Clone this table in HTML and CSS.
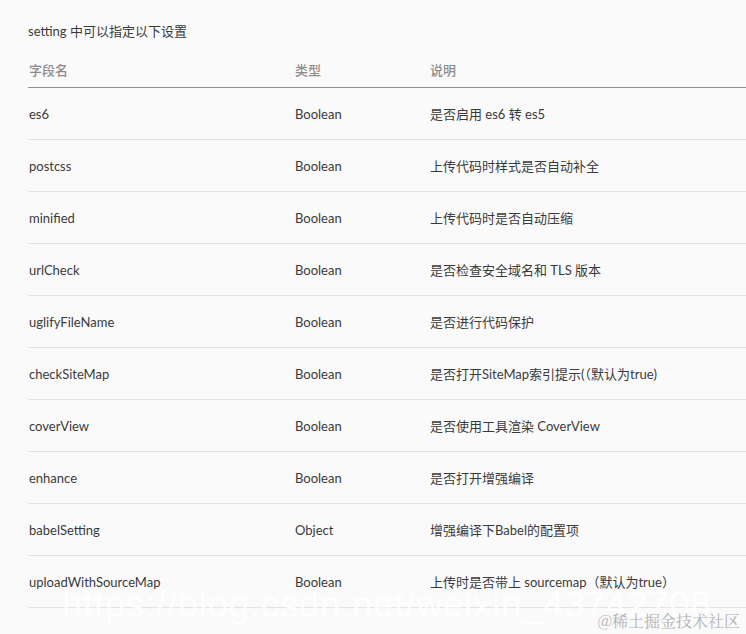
FILE: index.html
```html
<!DOCTYPE html>
<html lang="zh-CN">
<head>
<meta charset="utf-8">
<title>setting</title>
<link rel="stylesheet" href="styles.css">
</head>
<body>
<div class="page">
  <p class="intro">setting 中可以指定以下设置</p>
  <table class="fields">
    <thead>
      <tr><th class="c1">字段名</th><th class="c2">类型</th><th class="c3">说明</th></tr>
    </thead>
    <tbody>
      <tr><td>es6</td><td>Boolean</td><td>是否启用 es6 转 es5</td></tr>
      <tr><td>postcss</td><td>Boolean</td><td>上传代码时样式是否自动补全</td></tr>
      <tr><td>minified</td><td>Boolean</td><td>上传代码时是否自动压缩</td></tr>
      <tr><td>urlCheck</td><td>Boolean</td><td>是否检查安全域名和 TLS 版本</td></tr>
      <tr><td>uglifyFileName</td><td>Boolean</td><td>是否进行代码保护</td></tr>
      <tr><td>checkSiteMap</td><td>Boolean</td><td>是否打开SiteMap索引提示(（默认为true)</td></tr>
      <tr><td>coverView</td><td>Boolean</td><td>是否使用工具渲染 CoverView</td></tr>
      <tr><td>enhance</td><td>Boolean</td><td>是否打开增强编译</td></tr>
      <tr><td>babelSetting</td><td>Object</td><td>增强编译下Babel的配置项</td></tr>
      <tr><td>uploadWithSourceMap</td><td>Boolean</td><td>上传时是否带上 sourcemap（默认为true）</td></tr>
    </tbody>
  </table>
  <div class="wm-url">https://blog.csdn.net/weixin_43742708</div>
  <div class="wm-brand">@稀土掘金技术社区</div>
</div>
</body>
</html>
```

FILE: styles.css
```css
html, body {
  margin: 0;
  padding: 0;
  background: #fafafa;
}
body {
  font-family: "Lato", "Noto Sans CJK SC", sans-serif;
  font-size: 13px;
  color: #3a3a3a;
}
.page {
  position: relative;
  height: 634px;
  overflow: hidden;
  padding-left: 28px;
  box-sizing: border-box;
}
.intro {
  margin: 0;
  padding-top: 21px;
  line-height: 20px;
  height: 20px;
}
.fields {
  margin-top: 11px;
  width: 760px;
  border-collapse: collapse;
  table-layout: fixed;
}
.fields th {
  text-align: left;
  font-weight: 500;
  color: #8c8c8c;
  height: 35px;
  padding: 0 0 0 1px;
  border-bottom: 1px solid #8f8f8f;
  vertical-align: middle;
}
.fields .c1 { width: 265px; }
.fields .c2 { width: 134px; }
.fields td {
  height: 51px;
  padding: 0 0 0 1px;
  border-bottom: 1px solid #e3e3e3;
  vertical-align: middle;
  white-space: nowrap;
}
.wm-url {
  position: absolute;
  left: 62px;
  top: 584px;
  font-family: "Liberation Sans", sans-serif;
  font-size: 36px;
  letter-spacing: 1px;
  color: rgba(255, 255, 255, 0.9);
  white-space: nowrap;
  pointer-events: none;
}
.wm-brand {
  position: absolute;
  right: 6px;
  top: 609px;
  font-family: "Noto Serif CJK SC", "Noto Sans CJK SC", serif;
  font-size: 16px;
  color: #b4b4b4;
  white-space: nowrap;
}
```
